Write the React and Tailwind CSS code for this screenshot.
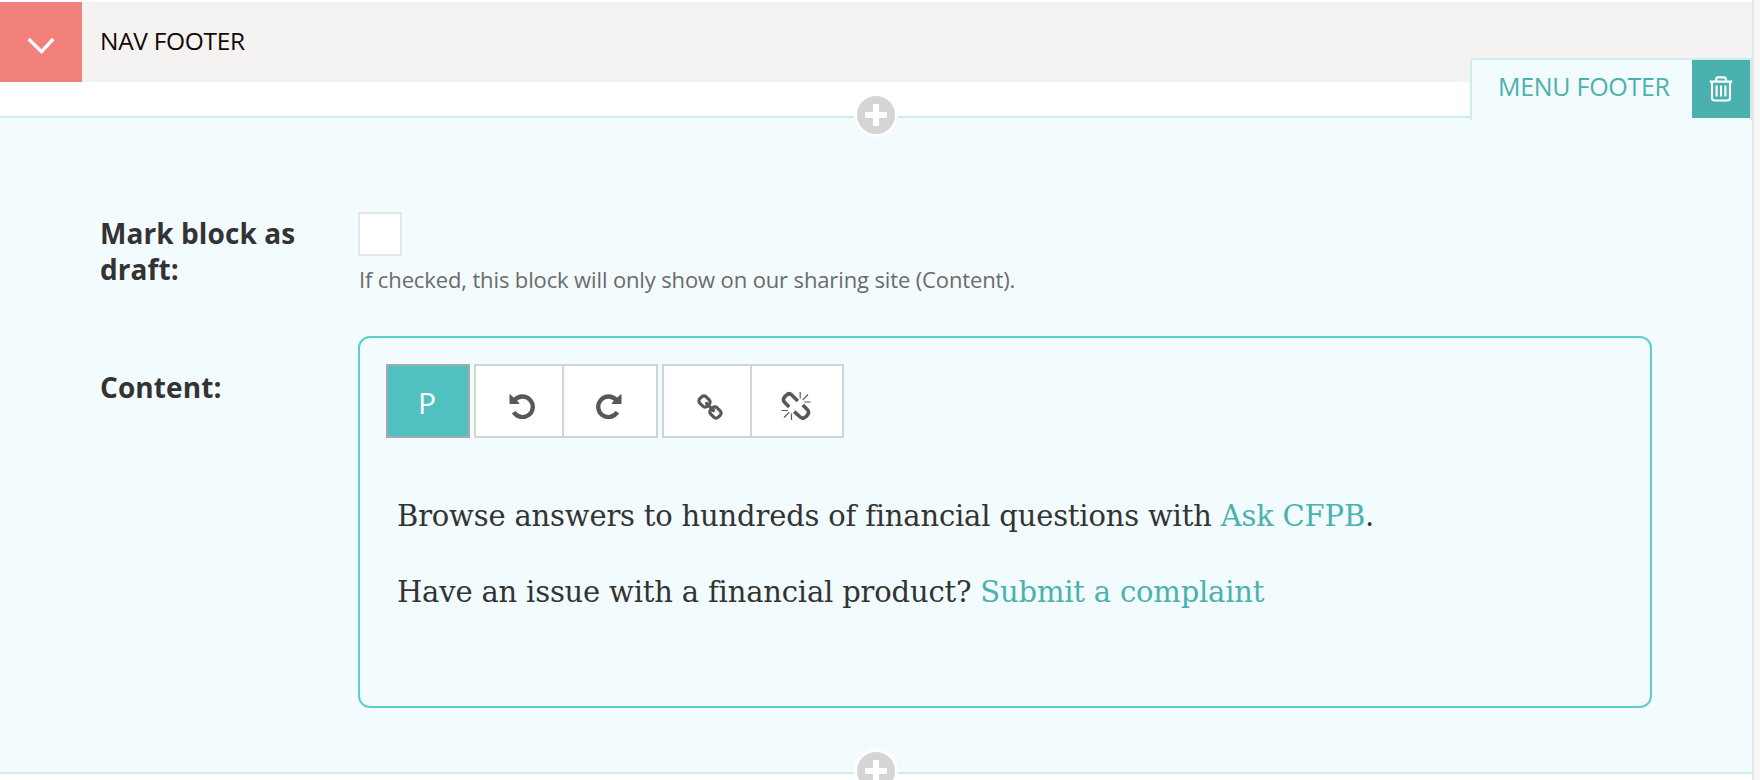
import React from "react";

function AddButton({ className }) {
  return (
    <button
      aria-label="Add block"
      className={"absolute left-[854px] flex size-11 items-center justify-center rounded-full border-[3px] border-white bg-[#d5d5d5] " + className}
    >
      <svg width="22" height="22" viewBox="0 0 22 22" fill="#fff">
        <rect x="8" y="0" width="6" height="22" rx="1.2" />
        <rect x="0" y="8" width="22" height="6" rx="1.2" />
      </svg>
    </button>
  );
}

function TrashIcon() {
  return (
    <svg width="24" height="26" viewBox="0 0 24 26" fill="none" stroke="#fff" strokeWidth="2.100">
      <path d="M.8 5.6H23.2M7.2 5V3.3Q7.2 1.4 9 1.4H15Q16.800 1.400 16.800 3.300V5M3 6V22Q3 24.500 5.500 24.500H18.500Q21 24.500 21 22V6M7.600 9.500V20.500M12 9.500V20.500M16.400 9.500V20.500" />
    </svg>
  );
}

function UndoIcon({ flip }) {
  return (
    <svg width="26" height="26" viewBox="0 0 26 26" className={flip ? "-scale-x-100" : ""}>
      <path d="M5.300 7.500A10.300 10.300 0 1 1 4.700 19.200" fill="none" stroke="#575958" strokeWidth="4.300" />
      <path d="M.5 1.600Q.8 1 1.500 1.500L10.300 10Q10.600 11 9.500 11H1.300Q.5 11 .5 10.200Z" fill="#575958" />
    </svg>
  );
}

function LinkIcon() {
  return (
    <svg width="26" height="26" viewBox="0 0 26 26" fill="none" stroke="#575958" strokeWidth="3.200">
      <rect x="2.200" y="3" width="10.600" height="9" rx="3.200" transform="rotate(45 7.500 7.500)" />
      <rect x="13.200" y="14" width="10.600" height="9" rx="3.200" transform="rotate(45 18.500 18.500)" />
      <path d="M9.500 9.500L16.500 16.500" strokeLinecap="round" />
    </svg>
  );
}

function UnlinkIcon() {
  return (
    <svg width="30" height="30" viewBox="0 0 30 30" fill="none" stroke="#575958">
      <path d="M8.200 16L3.800 11.600Q1.200 8.800 3.600 6L5.200 4.200Q8 1.400 10.800 4L16.800 10" strokeWidth="3.600" />
      <path d="M21.800 14L26.200 18.400Q28.800 21.200 26.400 24L24.800 25.800Q22 28.600 19.200 26L13.200 20.600" strokeWidth="3.600" />
      <path d="M19.200 1V7.500M27 3.500L21.700 8.800M23.200 11H29.500M10.500 22.500V29M3 26.500L8.300 21.200M.5 19.500H7" strokeWidth="1.200" />
    </svg>
  );
}

export default function App() {
  return (
    <div className="flex h-[780px] w-[1760px] overflow-hidden bg-white font-['Open_Sans','Noto_Sans',sans-serif]">
      <main className="relative flex w-[1752px] shrink-0 flex-col pt-0.5">
        <header className="flex h-20 shrink-0 items-center bg-[#f4f3f2]">
          <button aria-label="Collapse" className="flex h-20 w-[82px] items-center justify-center bg-[#f2807b] pt-2">
            <svg width="28" height="18" viewBox="0 0 28 18" fill="none" stroke="#fff" strokeWidth="3.400">
              <path d="M1.600 2L14.500 14.600L26.300 2" />
            </svg>
          </button>
          <h1 className="pb-0.5 pl-[18px] text-[24.5px] leading-8 tracking-[-0.3px] whitespace-nowrap text-[#150505]">NAV FOOTER</h1>
        </header>

        <section className="mt-[34px] flex h-[658px] shrink-0 flex-col border-y-2 border-[#cfeeeb] bg-[#f2fbfd] pt-[94px] pl-[100px]">
          <div className="flex h-[124px]">
            <label className="w-[258px] pt-[3px] text-[28px] leading-9 font-bold tracking-[0.08px] text-[#333]">
              Mark block as<br />draft:
            </label>
            <div className="flex flex-col">
              <span className="size-11 border-2 border-[#e6e6e6] bg-white" />
              <p className="mt-[7px] pl-px text-[22px] leading-8 tracking-[-0.13px] whitespace-nowrap text-[#6b6b6b]">
                If checked, this block will only show on our sharing site (Content).
              </p>
            </div>
          </div>
          <div className="flex">
            <label className="w-[258px] pt-[33px] text-[28px] leading-9 font-bold tracking-[0.08px] text-[#333]">Content:</label>
            <div className="h-[372px] w-[1294px] rounded-xl border-2 border-[#5bcfcc] pt-[26px] pl-[26px]">
              <div className="flex h-[74px] gap-1">
                <button className="flex w-[84px] items-center justify-center border-2 border-[#a5a9aa] bg-[#51c0c1] pt-0.5 pr-0.5 text-[30px] text-white">P</button>
                <div className="flex w-[184px] border-2 border-[#cfd5d5] bg-white">
                  <button className="flex w-[88px] items-center justify-center border-r-2 border-[#cfd5d5] pt-2.5 pl-1.5"><UndoIcon /></button>
                  <button className="flex w-[92px] items-center justify-center pt-2.5 pr-0.5"><UndoIcon flip /></button>
                </div>
                <div className="flex w-[182px] border-2 border-[#cfd5d5] bg-white">
                  <button className="flex w-[88px] items-center justify-center border-r-2 border-[#cfd5d5] pt-3 pl-1.5"><LinkIcon /></button>
                  <button className="flex w-[90px] items-center justify-center pt-2.5 pr-0.5"><UnlinkIcon /></button>
                </div>
              </div>
              <div className="flex flex-col gap-9 pt-[58px] pl-[11px] font-['Roboto_Slab','DejaVu_Serif',serif] text-[29px] leading-10 tracking-[-0.18px] whitespace-nowrap text-[#333]">
                <p>Browse answers to hundreds of financial questions with <a className="text-[#4bb1af]">Ask CFPB</a>.</p>
                <p>Have an issue with a financial product? <a className="text-[#4bb1af]">Submit a complaint</a></p>
              </div>
            </div>
          </div>
        </section>

        <div className="absolute top-[58px] right-0 flex h-[62px] w-[282px] rounded-tl border-2 border-b-0 border-[#cfeeeb] bg-[#f2fbfd]">
          <span className="w-[220px] pt-2.5 pl-[26px] text-[25px] leading-8 tracking-[-0.28px] whitespace-nowrap text-[#4bb1af]">MENU FOOTER</span>
          <button aria-label="Delete" className="flex h-[58px] w-[58px] items-center justify-center bg-[#4bb1af]"><TrashIcon /></button>
        </div>
        <AddButton className="top-[93px]" />
        <AddButton className="top-[749px]" />
      </main>
      <aside className="w-2 shrink-0 border-l-2 border-[#e6e6e6] bg-[#f6f6f6]" />
    </div>
  );
}
